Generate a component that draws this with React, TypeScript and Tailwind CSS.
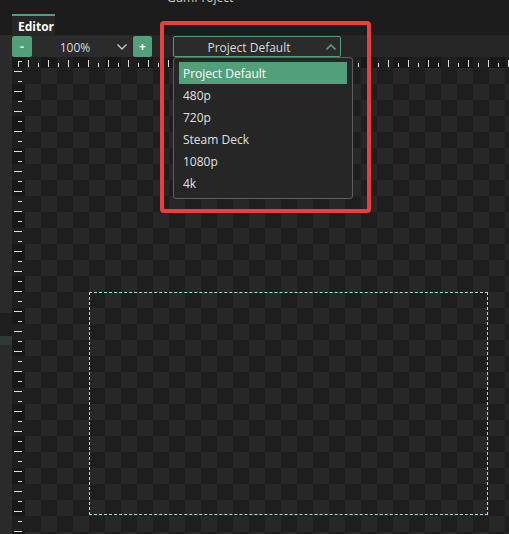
import { useState } from "react";

const GREEN = "#52a07a";

const options = ["Project Default", "480p", "720p", "Steam Deck", "1080p", "4k"];

const HRuler = () => {
  const ticks = Array.from({ length: 50 }, (_, i) => i);
  return (
    <svg className="block h-[11px] flex-1" height="11" width="100%">
      {ticks.map((i) =>
        i % 2 === 0 ? (
          <rect key={i} x={3 + i * 10} y={3} width={1} height={7} fill="#dcdcdc" />
        ) : (
          <rect key={i} x={3 + i * 10} y={6} width={1} height={4} fill="#dcdcdc" />
        )
      )}
    </svg>
  );
};

const VRuler = () => {
  const ticks = Array.from({ length: 48 }, (_, i) => i);
  return (
    <svg className="block h-full w-[13px]" width="13" height="100%">
      {ticks.map((i) =>
        i % 2 === 0 ? (
          <rect key={i} x={2} y={3 + i * 10} width={8} height={1} fill="#dcdcdc" />
        ) : (
          <rect key={i} x={6} y={3 + i * 10} width={4} height={1} fill="#dcdcdc" />
        )
      )}
    </svg>
  );
};

export default function App() {
  const [selected, setSelected] = useState("Project Default");

  return (
    <div className="relative flex h-[534px] w-[509px] flex-col overflow-hidden bg-[#1c1c1c] font-['Open_Sans',sans-serif] text-[12px] text-[#e0e0e0]">
      {/* Title + tabs */}
      <div className="relative h-[35px] shrink-0">
        <div className="absolute left-[167px] top-[-11px] text-[12px] text-[#cfcfcf]">GumProject</div>
        <div className="absolute bottom-0 left-[12px] flex h-[21px] w-[43px] items-center border-t-2 border-[#52a07a] bg-[#262626] pl-[6px] pt-[2px] font-bold text-white">
          Editor
        </div>
      </div>

      <div className="flex min-h-0 flex-1">
        {/* left panel edge */}
        <div className="flex w-[12px] shrink-0 flex-col bg-[#2a2a2a]">
          <div className="h-[278px]" />
          <div className="h-[23px] bg-[#1e1e1e]" />
          <div className="h-[9px] bg-[#2e3b33]" />
        </div>

        <div className="flex min-w-0 flex-1 flex-col">
          {/* Toolbar */}
          <div className="flex h-[22px] shrink-0 items-start bg-[#262626] pt-px">
            <button className="flex h-[21px] w-[20px] items-center justify-center rounded-[2px] bg-[#52a07a] font-bold text-white">
              -
            </button>
            <div className="relative flex h-[21px] w-[100px] items-center justify-center bg-[#2b2b2b] pr-[14px] pt-[2px] text-[#dcdcdc]">
              100%
              <svg className="absolute right-[5px] top-[8px]" width="10" height="6" viewBox="0 0 10 6">
                <polyline points="0.5,0.5 5,5 9.5,0.5" fill="none" stroke="#c8c8c8" strokeWidth="1.4" />
              </svg>
            </div>
            <button className="ml-px flex h-[21px] w-[19px] items-center justify-center rounded-[2px] bg-[#52a07a] font-bold text-white">
              +
            </button>
            <div className="relative ml-[21px] w-[168px]">
              <div className="relative flex h-[21px] items-center justify-center rounded-[2px] border border-[#52a07a] bg-[#2b2b2b] pr-[16px] pt-[2px] text-[#dcdcdc]">
                {selected}
                <svg className="absolute right-[4px] top-[7px]" width="10" height="6" viewBox="0 0 10 6">
                  <polyline points="0.5,5.5 5,1 9.5,5.5" fill="none" stroke={GREEN} strokeWidth="1.6" />
                </svg>
              </div>
              {/* Dropdown list */}
              <div className="absolute left-0 top-[21px] z-10 w-[180px] rounded-[3px] border border-[#5e5e5e] bg-[#262626] px-[5px] pb-[4px] pt-[4px]">
                {options.map((o) => (
                  <div
                    key={o}
                    onClick={() => setSelected(o)}
                    className={`flex h-[22px] items-center px-[4px] pt-[2px] ${
                      o === selected ? "bg-[#52a07a] text-white" : "text-[#e0e0e0]"
                    }`}
                  >
                    {o}
                  </div>
                ))}
              </div>
            </div>
          </div>

          {/* Canvas */}
          <div className="flex min-h-0 flex-1 flex-col bg-[repeating-conic-gradient(#272727_0_25%,#1e1e1e_0_50%)] bg-[length:32px_32px] bg-[position:-3px_-5px]">
            <div className="flex h-[11px] shrink-0 bg-black/20">
              <div className="relative w-[13px] shrink-0">
                <div className="absolute left-[6px] top-[4px] h-px w-[4px] bg-[#dcdcdc]" />
                <div className="absolute left-[6px] top-[5px] h-[5px] w-px bg-[#dcdcdc]" />
              </div>
              <HRuler />
            </div>
            <div className="flex min-h-0 flex-1">
              <div className="w-[13px] shrink-0 bg-black/20">
                <VRuler />
              </div>
              <div className="relative flex-1">
                <div className="absolute left-[64px] top-[224px] h-[223px] w-[399px] border border-dashed border-[#a6dcef]" />
              </div>
            </div>
          </div>
        </div>
      </div>

      {/* Highlight annotation */}
      <div className="pointer-events-none absolute left-[160px] top-[21px] h-[192px] w-[211px] rounded-[4px] border-4 border-[#e8403f]" />
    </div>
  );
}
